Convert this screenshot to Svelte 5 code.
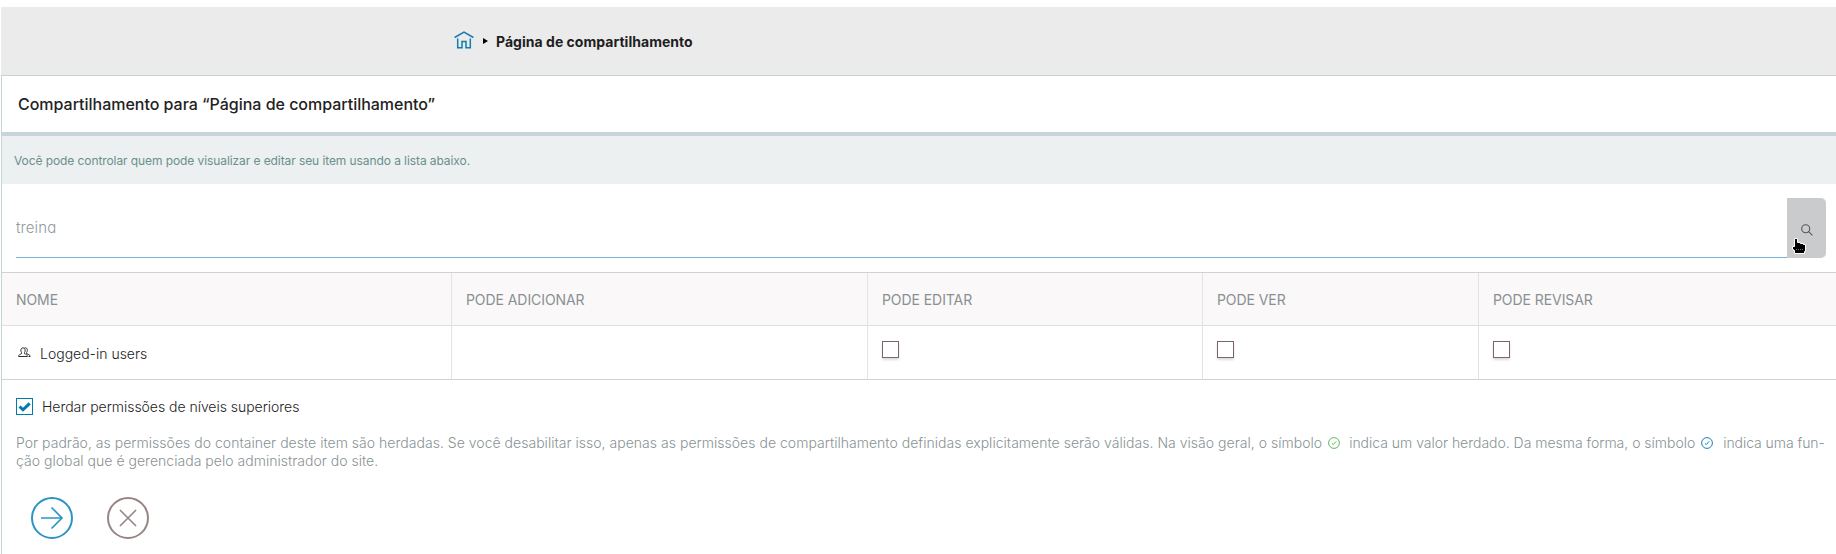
<script>
  const columns = ['NOME', 'PODE ADICIONAR', 'PODE EDITAR', 'PODE VER', 'PODE REVISAR'];
  let inherit = $state(true);
</script>

{#snippet seal(kind)}
  <svg class="seal {kind}" width="12" height="12" viewBox="0 0 12 12" aria-hidden="true">
    <circle cx="6" cy="6" r="5.4" />
    <path d="M3.9 6.3 5.3 7.6 8.2 4.4" />
  </svg>
{/snippet}

<main class="page">
  <nav class="crumbs">
    <svg class="home" width="20" height="18" viewBox="0 0 20 18" aria-hidden="true">
      <path d="M.6 6.500 10 1.200l9.400 5.300M3.700 7.500v9.300h4.300v-6.300h4v6.300h4.300V7.500" />
    </svg>
    <span class="arrow"></span>
    <strong class="t-crumb">Página de compartilhamento</strong>
  </nav>

  <section class="panel">
    <h1><span class="t-title">Compartilhamento para “Página de compartilhamento”</span></h1>
    <p class="info"><span class="t-info">Você pode controlar quem pode visualizar e editar seu item usando a lista abaixo.</span></p>

    <div class="search">
      <div class="field"><span class="t-search">treina</span></div>
      <button class="go" aria-label="Buscar">
        <svg width="12" height="12" viewBox="0 0 12 12"><circle cx="4.7" cy="4.7" r="4" /><path d="m7.600 7.600 3.800 3.800" /></svg>
        <svg class="pointer" width="16" height="18" viewBox="0 0 16 18">
          <path d="M3.500.5h3v4h3v1h3v1h2v7h-1v2h-10v-3h-1v-1h-1v-3h2z" />
          <path class="dots" d="M5 11.500h1m1 0h1m1 0h1m1 0h1" />
        </svg>
      </button>
    </div>

    <div class="grid">
      {#each columns as name}<div class="cell head"><span>{name}</span></div>{/each}
      <div class="cell user">
        <svg width="13" height="10" viewBox="0 0 13 10" aria-hidden="true">
          <path d="M.6 9.500h8.800C9.400 7.700 8.200 7.400 6.500 6.700V5.500C7.700 4.100 7.400.8 5 .8S2.300 4.100 3.500 5.500v1.200C1.800 7.400.6 7.700.6 9.500zM6.600 1C8.800.1 10.300 2.900 8.600 5.500v1.200c1.700.7 3.400 1 3.600 2.800h-1.700" />
        </svg>
        <span>Logged-in users</span>
      </div>
      <div class="cell"></div>
      {#each columns.slice(2) as name}
        <div class="cell"><input type="checkbox" aria-label={name} /></div>
      {/each}
    </div>

    <label class="inherit">
      <input type="checkbox" bind:checked={inherit} />
      <span class="t-inherit">Herdar permissões de níveis superiores</span>
    </label>

    <p class="help">
      <span class="a">Por padrão, as permissões do container deste item são herdadas. Se você desabilitar isso, apenas as permissões de compartilhamento definidas explicitamente serão válidas. Na visão geral, o símbolo</span>{@render seal('green')}<span class="b">indica um valor herdado. Da mesma forma, o símbolo</span>{@render seal('blue')}<span class="c">indica uma fun-</span><br /><span class="d">ção global que é gerenciada pelo administrador do site.</span>
    </p>

    <div class="actions">
      <button aria-label="Salvar">
        <svg class="save" width="42" height="42" viewBox="0 0 42 42"><circle cx="21" cy="21" r="20" /><path d="M10 21h21M20.500 10.500 31 21 20.500 31.500" /></svg>
      </button>
      <button aria-label="Cancelar">
        <svg class="cancel" width="42" height="42" viewBox="0 0 42 42"><circle cx="21" cy="21" r="20" /><path d="m13 13 16 16M29 13 13 29" /></svg>
      </button>
    </div>
  </section>
</main>

<style>
  :global(body) { margin: 0; background: #fff; }
  * { box-sizing: border-box; }
  .page {
    height: 554px;
    overflow: hidden;
    padding: 7px 0 0 1px;
    font-family: Inter, sans-serif;
    font-size: 14px;
    color: #3b3b3c;
  }
  span, strong { white-space: nowrap; }
  svg { fill: none; flex: none; display: block; }
  .crumbs { display: flex; align-items: center; height: 68px; padding-left: 453px; background: #ebebeb; color: #1e1e1f; }
  .home { stroke: #127dae; stroke-width: 1.5; margin-top: -2px; }
  .arrow { margin: 0 8px 0 9px; border: 3px solid transparent; border-width: 3px 0 3px 5px; border-left-color: #000; outline: 0; }
  .t-crumb { font-size: 14px; font-weight: 700; letter-spacing: .03px; }
  .panel { height: 479px; border: 1px solid #c5d3d6; border-width: 1px 0 0 1px; }
  h1 { display: flex; align-items: center; height: 60px; margin: 0; padding-left: 16px; border-bottom: 4px solid #c7d5d8; color: #222; font-size: 16px; font-weight: 500; letter-spacing: -.02px; }
  .info { display: flex; align-items: center; height: 48px; margin: 0; padding: 0 0 0 12px; background: #ecf0f1; color: #6b8f8c; font-size: 12px; letter-spacing: -.085px; }
  .search { display: flex; height: 60px; margin: 14px 10px 14px 14px; }
  .field { flex: 1; display: flex; align-items: center; border-bottom: 1px solid #7bb0d6; color: #919a9d; font-size: 15px; font-weight: 300; font-feature-settings: "cv11"; letter-spacing: .1px; }
  .go { position: relative; width: 39px; padding: 4px 0 0; display: grid; place-items: center; border: 0; border-radius: 0 5px 5px 0; background: #cacbcd; }
  .go svg { stroke: #55575a; stroke-width: 1.1; }
  .go .pointer { position: absolute; left: 4px; top: 40px; fill: #000; stroke: #fff; stroke-width: 1; }
  .go .dots { stroke: #777; }
  .grid { display: grid; grid-template-columns: 450px 416px 335px 276px 1fr; grid-template-rows: 53px 54px; border-top: 1px solid #d1d3d3; }
  .cell { border-right: 1px solid #e3e3e4; border-bottom: 1px solid #d1d3d3; padding-left: 14px; }
  .cell:nth-child(5n) { border-right: 0; }
  .head { display: flex; align-items: center; background: #faf8f9; border-bottom-color: #dedfe0; color: #899092; letter-spacing: -.07px; }
  .user { display: flex; align-items: center; gap: 9px; padding: 2px 0 0 16px; font-weight: 300; color: #222; }
  .user svg { stroke: #333; stroke-width: 1; margin-top: -3px; }
  input { appearance: none; display: block; width: 17px; height: 17px; margin: 15px 0 0; border: 1px solid #7c6467; background: #fff; box-shadow: 0 2px 2px #0002; }
  .inherit { display: flex; gap: 9px; align-items: center; height: 17px; margin: 18px 0 0 14px; font-weight: 300; letter-spacing: -.03px; color: #222; }
  .inherit input { margin: 0; border-color: #007bb1; box-shadow: none; }
  .inherit input:checked { background: url("data:image/svg+xml,%3Csvg xmlns='http://www.w3.org/2000/svg' viewBox='0 0 15 15'%3E%3Cpath d='M2.500 7.500 6 10.800 12.700 4.400' fill='none' stroke='%23007bb1' stroke-width='3'/%3E%3C/svg%3E"); }
  .help { margin: 19px 0 0 14px; color: #899295; font-weight: 300; line-height: 18px; letter-spacing: .023px; white-space: nowrap; }
  .b { letter-spacing: -.02px; }
  .c { letter-spacing: -.06px; }
  .seal { display: inline-block; vertical-align: -1px; margin: 0 9px 0 6px; }
  .blue { margin-right: 10px; }
  .green { stroke: #5cb85f; }
  .blue { stroke: #1685b9; }
  .actions { display: flex; gap: 34px; padding: 27px 0 0 29px; }
  .actions button { border: 0; padding: 0; background: none; }
  .save { stroke: #2c96c3; stroke-width: 2; }
  .cancel { stroke: #988585; stroke-width: 2; }
  .save path, .cancel path { stroke-width: 1.7; }
</style>
